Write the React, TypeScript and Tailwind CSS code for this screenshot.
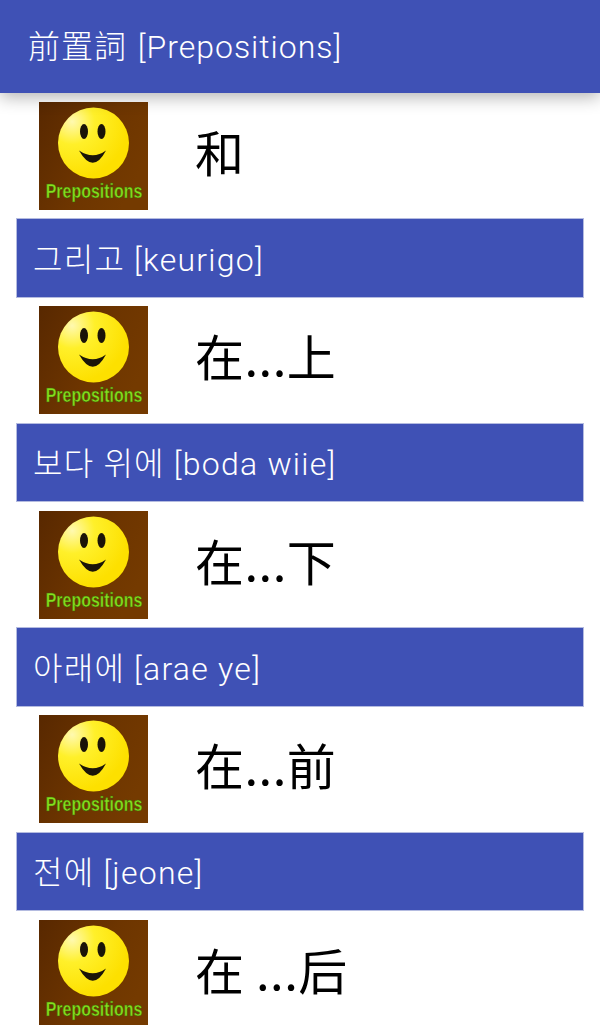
import React from "react";

const rows = [
  { zh: "和", ko: "그리고 [keurigo]" },
  { zh: "在...上", ko: "보다 위에 [boda wiie]" },
  { zh: "在...下", ko: "아래에 [arae ye]" },
  { zh: "在...前", ko: "전에 [jeone]" },
  { zh: "在 ...后", ko: "" },
];

const Smiley = ({ id }: { id: number }) => (
  <svg viewBox="0 0 109 108" className="w-[109px] h-[108px] shrink-0">
    <defs>
      <linearGradient id={`bg${id}`} x1="0" y1="0" x2="1" y2="0.5">
        <stop offset="0" stopColor="#582800" />
        <stop offset="0.6" stopColor="#6d3500" />
        <stop offset="1" stopColor="#743a00" />
      </linearGradient>
      <radialGradient id={`face${id}`} cx="0.2" cy="0.2" r="0.8">
        <stop offset="0" stopColor="#fff9b0" />
        <stop offset="0.4" stopColor="#fff02a" />
        <stop offset="1" stopColor="#fde000" />
      </radialGradient>
    </defs>
    <rect width="109" height="108" fill={`url(#bg${id})`} />
    <circle cx="54.5" cy="41" r="35.5" fill={`url(#face${id})`} />
    <ellipse cx="45" cy="29.5" rx="4" ry="7.5" fill="#1a1408" />
    <ellipse cx="62.5" cy="29.5" rx="4" ry="7.5" fill="#1a1408" />
    <path d="M40 48.5 Q54 58 67 48.5 Q54 73 40 48.5 Z" fill="#1a1408" />
    <text
      transform="translate(55 95.5) scale(0.76 1)"
      textAnchor="middle"
      fill="#84e01c"
      stroke="#3c5a08"
      strokeWidth="0.5"
      fontSize="21"
      fontWeight="700"
      fontFamily="'Liberation Sans', sans-serif"
    >
      Prepositions
    </text>
  </svg>
);

export default function App() {
  return (
    <div
      className="w-[600px] h-[1025px] overflow-hidden bg-white"
      style={{ fontFamily: "Roboto, 'Noto Sans CJK KR', sans-serif" }}
    >
      <header className="relative z-10 h-[93px] bg-[#3f51b5] flex items-center pl-[28px] text-white text-[32px] tracking-[1px] [word-spacing:2px] font-light shadow-[0_4px_16px_rgba(0,0,0,0.3)]">
        <span style={{ fontFamily: "Roboto, 'Noto Sans CJK TC', sans-serif" }}>前置詞 [Prepositions]</span>
      </header>
      <div>
        {rows.map((row, i) => (
          <div key={i} className="h-[204.5px]">
            <div className="h-[125px] flex items-start pl-[39px] pt-[8.9px]">
              <Smiley id={i} />
              <span
                className="ml-[47px] mt-[19px] text-[49px] leading-[60px] tracking-[0.5px] text-black whitespace-pre"
                style={{ fontFamily: "'Noto Sans CJK SC', sans-serif" }}
              >
                {row.zh}
              </span>
            </div>
            {row.ko && (
              <div className="mx-[16px] h-[79.5px] bg-[#3f51b5] border border-[#b4bbe0] flex items-center pl-[16px] pt-[4px] text-white text-[32px] tracking-[1.25px] font-light">
                {row.ko}
              </div>
            )}
          </div>
        ))}
      </div>
    </div>
  );
}
